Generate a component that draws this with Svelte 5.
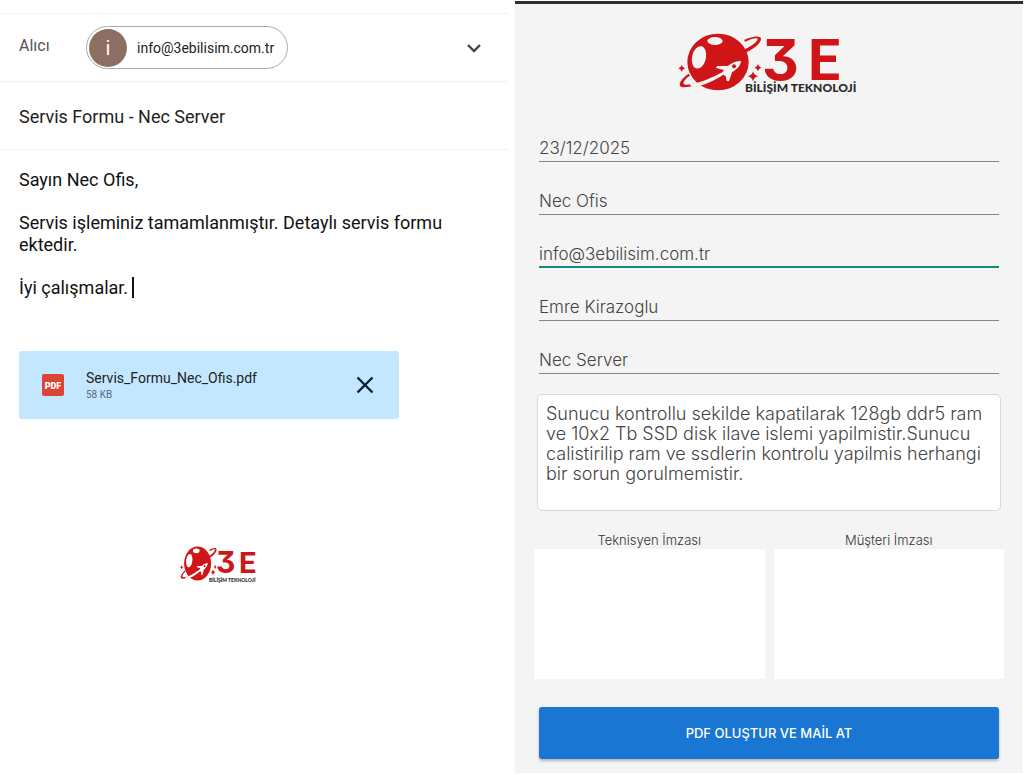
<script>
  let recipient = $state('info@3ebilisim.com.tr');
  let subject = $state('Servis Formu - Nec Server');
  let fields = $state([
    { id: 'date', label: 'Tarih', value: '23/12/2025' },
    { id: 'customer', label: 'Müşteri', value: 'Nec Ofis' },
    { id: 'email', label: 'E-posta', value: 'info@3ebilisim.com.tr', active: true },
    { id: 'technician', label: 'Teknisyen', value: 'Emre Kirazoglu' },
    { id: 'job', label: 'Konu', value: 'Nec Server' }
  ]);
  let notes = $state(
    'Sunucu kontrollu sekilde kapatilarak 128gb ddr5 ram ve 10x2 Tb SSD disk ilave islemi yapilmistir.Sunucu calistirilip ram ve ssdlerin kontrolu yapilmis herhangi bir sorun gorulmemistir.'
  );
  let attached = $state(true);
  const signatures = ['Teknisyen İmzası', 'Müşteri İmzası'];
</script>

{#snippet planet(x, y, w, h, bg)}
  <svg {x} {y} width={w} height={h} viewBox="54 40 252 174" preserveAspectRatio="none">
    <g fill="#cf1517">
      <ellipse cx="174" cy="127" rx="92" ry="85" />
      <path d="M250 91C275 80 292 66 293 59C294 53 276 56 256 66L252 61C278 48 302 47 303 57C304 69 282 88 256 99Z" />
      <path d="M86 162C68 174 56 190 60 198C66 208 104 200 138 187L132 182C100 194 74 199 71 192C69 186 77 176 90 168Z" />
      <path d="M65 136Q67 144 76 146Q67 148 65 156Q63 148 55 146Q63 144 65 136Z" />
      <path d="M294 133Q296 142 304 144Q296 146 294 155Q292 146 284 144Q292 142 294 133Z" />
      <path d="M279 155Q282 167 294 170Q282 173 279 185Q276 173 264 170Q276 167 279 155Z" />
    </g>
    <g fill={bg}>
      <ellipse cx="117" cy="113" rx="21" ry="34" transform="rotate(12 117 113)" />
      <ellipse cx="165" cy="64" rx="23" ry="12" />
      <path d="M88 193C125 190 154 174 187 158L192 151L168 145L171 139L203 139C217 128 231 124 243 124C242 138 230 150 216 158L207 185L200 184L197 169L190 165C166 180 130 200 96 201Z" />
    </g>
    <circle cx="222" cy="140" r="6" fill="#cf1517" />
  </svg>
{/snippet}

<div class="screen">
  <section class="mail">
    <div class="row to">
      <span class="to-label">Alıcı</span>
      <span class="chip"><span class="avatar">i</span><span>{recipient}</span></span>
      <button class="icon expand" aria-label="Genişlet">
        <svg width="16" height="10" viewBox="0 0 16 10"><path d="M2 2L8 8L14 2" fill="none" stroke="#444" stroke-width="2.4" /></svg>
      </button>
    </div>
    <div class="row">
      <input class="subject" aria-label="Konu" bind:value={subject} />
    </div>
    <div class="message" contenteditable="true" role="textbox" tabindex="0" aria-multiline="true" aria-label="İleti">
      <p>Sayın Nec Ofis,</p>
      <p>Servis işleminiz tamamlanmıştır. Detaylı servis formu ektedir.</p>
      <p>İyi çalışmalar.<span class="caret"></span></p>
    </div>
    {#if attached}
      <div class="attachment">
        <svg width="22" height="22" viewBox="0 0 22 22">
          <rect width="22" height="22" rx="2" fill="#db4437" />
          <text x="11" y="15" text-anchor="middle" class="pdf">PDF</text>
        </svg>
        <div class="file"><span class="name">Servis_Formu_Nec_Ofis.pdf</span><span class="size">58 KB</span></div>
        <button class="icon" aria-label="Kaldır" onclick={() => (attached = false)}>
          <svg width="18" height="18" viewBox="0 0 18 18"><path d="M1.5 1.5L16.5 16.5M16.5 1.5L1.5 16.5" fill="none" stroke="#0b1d33" stroke-width="2.4" /></svg>
        </button>
      </div>
    {/if}
    <svg class="signature-logo" width="84" height="40" viewBox="0 0 84 40">
      {@render planet(0, 0, 37, 35, '#fff')}
      <g class="mark small"><text class="three" x="36" y="27">3</text><text x="59" y="27">E</text></g>
      <text class="tag small" x="29" y="36">BİLİŞİM TEKNOLOJİ</text>
    </svg>
  </section>

  <form class="service" onsubmit={(e) => e.preventDefault()}>
    <svg class="logo" width="182" height="62" viewBox="0 0 182 62">
      {@render planet(0, 0, 84, 58, '#f4f4f4')}
      <g class="mark"><text class="three" x="84" y="47">3</text><text x="130" y="47">E</text></g>
      <text class="tag" x="67" y="59">BİLİŞİM TEKNOLOJİ</text>
    </svg>
    <div class="fields">
      {#each fields as f (f.id)}
        <input id={f.id} class:active={f.active} aria-label={f.label} bind:value={f.value} />
      {/each}
    </div>
    <textarea aria-label="Açıklama" spellcheck="false" bind:value={notes}></textarea>
    <div class="signatures">
      {#each signatures as s}
        <figure><figcaption>{s}</figcaption><div class="pad"></div></figure>
      {/each}
    </div>
    <button class="submit">PDF OLUŞTUR VE MAİL AT</button>
  </form>
</div>

<style>
  :global(body) { margin: 0; background: #fff; }
  * { box-sizing: border-box; }
  .screen {
    display: grid;
    grid-template-columns: 1fr 1fr;
    gap: 7px;
    padding: 1px 1px 2px 0;
    min-height: 775px;
    font-family: Roboto, sans-serif;
    color: #222;
  }
  .mail { padding-top: 12px; min-width: 0; }
  .row {
    display: flex;
    align-items: center;
    height: 68px;
    padding: 0 19px;
    border-top: 1px solid #f1f1f1;
  }
  .to-label { width: 67px; font-size: 16px; color: #555; padding-bottom: 4px; }
  .chip {
    display: flex;
    align-items: center;
    gap: 10px;
    height: 43px;
    padding: 0 13px 0 2px;
    border: 1px solid #aaa;
    border-radius: 22px;
    font-size: 14px;
  }
  .avatar {
    display: grid;
    place-items: center;
    width: 38px;
    height: 38px;
    border-radius: 50%;
    background: #8d6e63;
    color: #fff;
    font-size: 20px;
  }
  .icon { display: grid; place-items: center; padding: 0; border: 0; background: none; }
  .expand { margin-left: auto; padding: 0 7px; }
  input { border: 0; outline: 0; background: none; padding: 0; min-width: 0; width: 100%; }
  .subject { padding-top: 2px; font: 18px Roboto, sans-serif; color: #222; }
  .message {
    padding: 19px 19px 0;
    border-top: 1px solid #f1f1f1;
    outline: 0;
    font: 18px/22px Roboto, sans-serif;
    color: #111;
  }
  .message p { margin: 0 0 21px; }
  .caret { display: inline-block; width: 2px; height: 21px; margin-left: 4px; background: #111; vertical-align: -4px; }
  .attachment {
    display: flex;
    align-items: center;
    gap: 22px;
    height: 68px;
    margin: 52px 109px 0 19px;
    padding: 0 25px 0 23px;
    border-radius: 3px;
    background: #c2e7ff;
  }
  .pdf { font: 900 9px Roboto, sans-serif; fill: #fff; }
  .file { display: flex; flex-direction: column; flex: 1; gap: 3px; }
  .name { font-size: 14px; line-height: 16px; }
  .size { font-size: 10px; line-height: 12px; color: #5c6b78; }
  .signature-logo { display: block; overflow: visible; margin: 127px 0 0 180px; }
  .mark { font: 700 57px Roboto, sans-serif; fill: #cf1517; }
  .mark.small { font-size: 30px; }
  .mark .three { font-family: Inter, sans-serif; font-feature-settings: "cv09"; }
  .tag { font: 900 12px Lato, sans-serif; fill: #2a2a2a; }
  .tag.small { font-size: 5px; }

  .service {
    display: flex;
    flex-direction: column;
    min-width: 0;
    padding: 29px 24px 14px;
    border-top: 3px solid #2b2f2f;
    background: #f4f4f4;
    font-family: Inter, sans-serif;
  }
  .logo { align-self: center; overflow: visible; }
  .fields { display: flex; flex-direction: column; padding-top: 14px; }
  .fields input {
    height: 53px;
    padding-top: 26px;
    border-bottom: 1px solid #888;
    font: 300 17px Inter, sans-serif;
    color: #444;
  }
  .fields input.active { border-bottom: 2px solid #16897f; }
  textarea {
    height: 117px;
    margin: 20px -2px 0;
    padding: 9px 8px;
    border: 1px solid #d8d8d8;
    border-radius: 5px;
    outline: 0;
    resize: none;
    background: #fff;
    font: 300 18px/20px Inter, sans-serif;
    font-variant-ligatures: no-contextual;
    color: #444;
  }
  .signatures { display: grid; grid-template-columns: 1fr 1fr; gap: 9px; margin: 20px -5px 0; }
  figure { margin: 0; }
  figcaption { text-align: center; font-size: 13px; line-height: 18px; color: #333; font-weight: 300; }
  .pad { height: 130px; background: #fff; }
  .submit {
    height: 52px;
    margin-top: 28px;
    border: 0;
    border-radius: 3px;
    background: #1976d2;
    box-shadow: 0 2px 3px #0004;
    color: #fff;
    font: 500 13px Inter, sans-serif;
  }
</style>
